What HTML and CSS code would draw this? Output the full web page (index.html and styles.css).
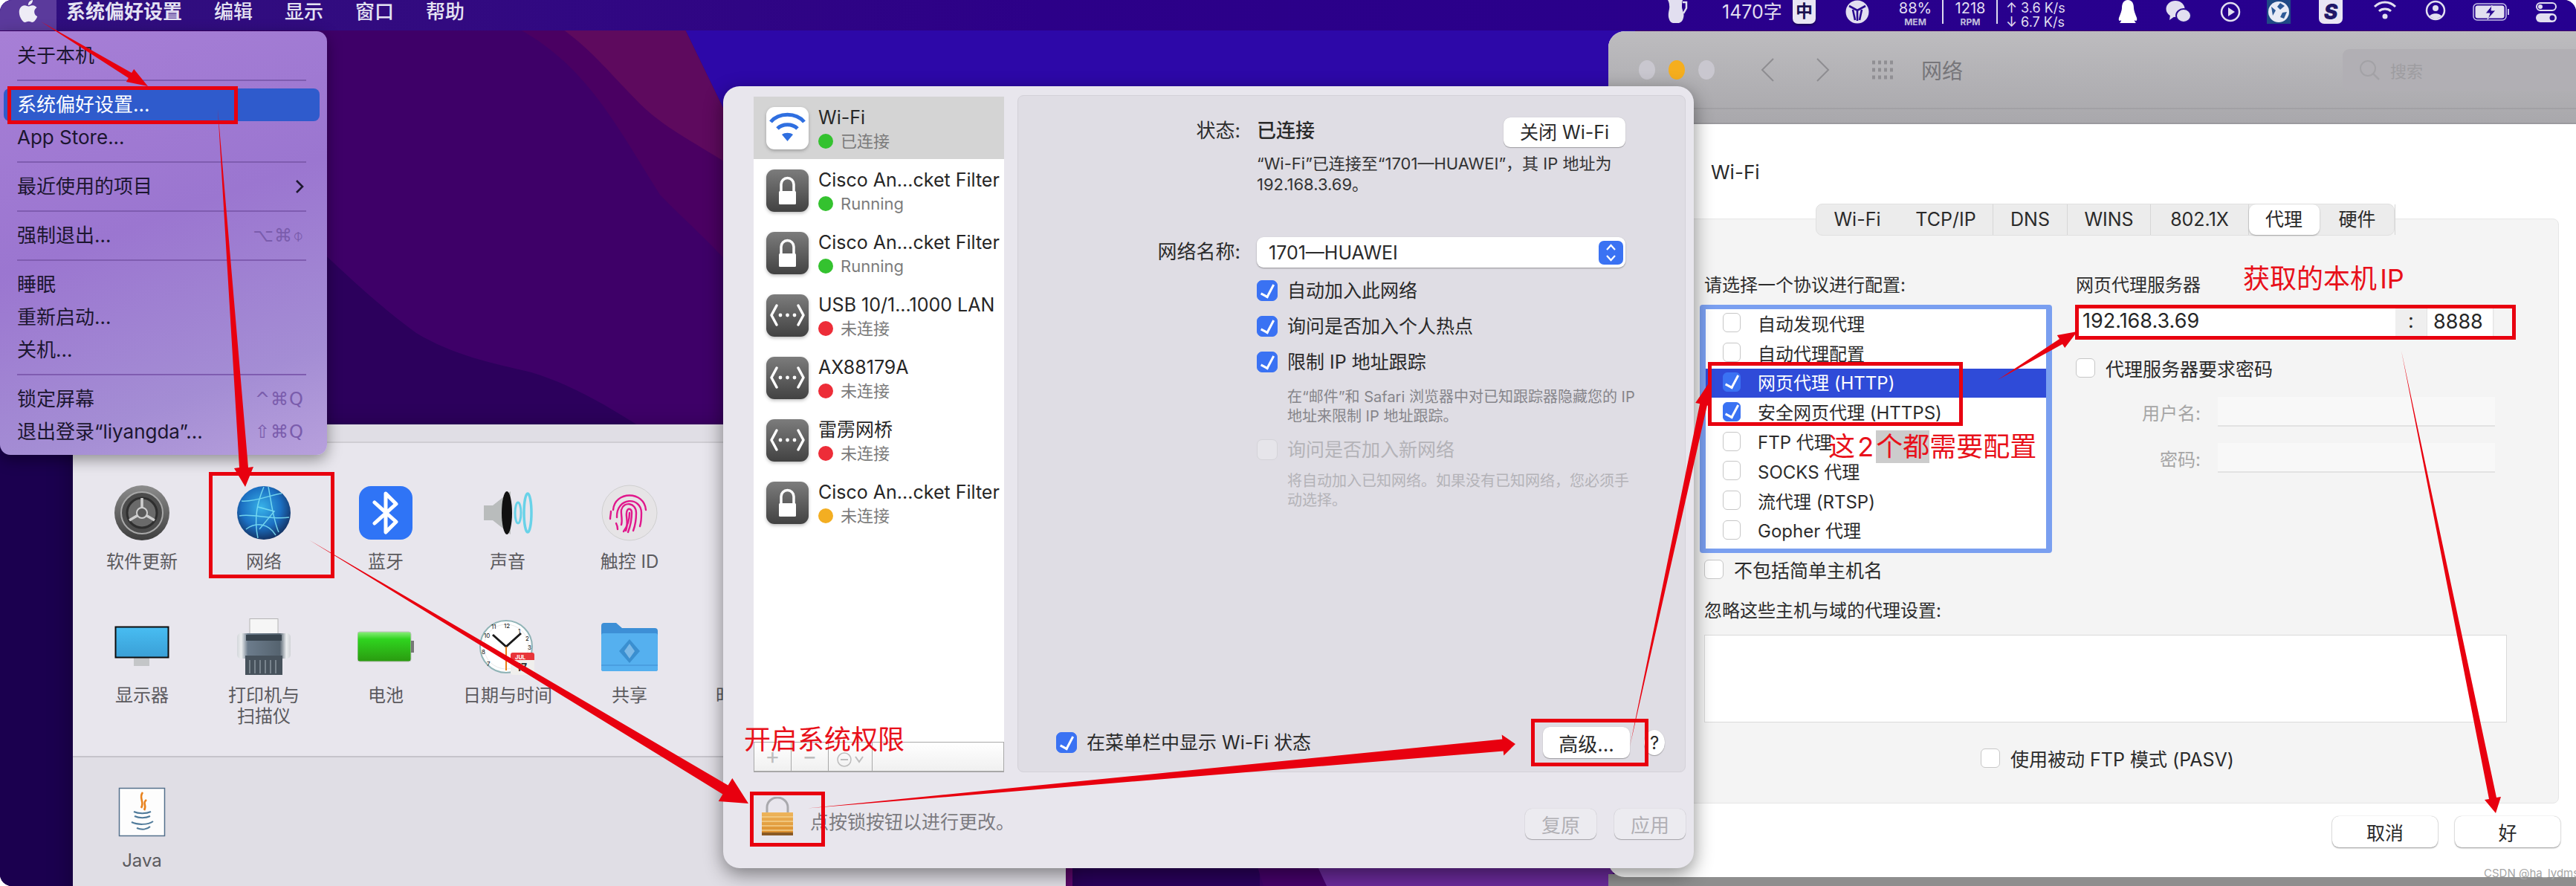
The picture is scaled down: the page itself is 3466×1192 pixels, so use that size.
FILE: index.html
```html
<!DOCTYPE html>
<html lang="zh-CN">
<head>
<meta charset="utf-8">
<title>网络</title>
<link rel="stylesheet" href="styles.css">
</head>
<body>
<svg class="defs" width="0" height="0">
  <defs>
    <linearGradient id="gTile" x1="0" y1="0" x2="0" y2="1"><stop offset="0" stop-color="#7c7c7c"/><stop offset="1" stop-color="#424242"/></linearGradient>
    <radialGradient id="gGlobe" cx=".45" cy=".4" r=".62"><stop offset="0" stop-color="#38b4ea"/><stop offset=".6" stop-color="#1b6fc2"/><stop offset="1" stop-color="#14305f"/></radialGradient>
    <linearGradient id="gUpd" x1="0" y1="0" x2="0" y2="1"><stop offset="0" stop-color="#8c8c8c"/><stop offset="1" stop-color="#3e3e3e"/></linearGradient>
    <linearGradient id="gBat" x1="0" y1="0" x2="0" y2="1"><stop offset="0" stop-color="#8bee7c"/><stop offset=".25" stop-color="#2fd41f"/><stop offset="1" stop-color="#2a9a10"/></linearGradient>
    <linearGradient id="gDisp" x1="0" y1="0" x2="0" y2="1"><stop offset="0" stop-color="#48bdf2"/><stop offset="1" stop-color="#3a9fd6"/></linearGradient>
    <linearGradient id="gLock" x1="0" y1="0" x2="0" y2="1"><stop offset="0" stop-color="#eeb55c"/><stop offset="1" stop-color="#d98a28"/></linearGradient>
    <linearGradient id="gPrint" x1="0" y1="0" x2="1" y2="0"><stop offset="0" stop-color="#d4d7db"/><stop offset=".08" stop-color="#eceef0"/><stop offset=".2" stop-color="#6c7c8c"/><stop offset=".8" stop-color="#55636f"/><stop offset=".92" stop-color="#eceef0"/><stop offset="1" stop-color="#cfd2d6"/></linearGradient>
    <symbol id="tileLock" viewBox="0 0 57 57">
      <rect x="0" y="0" width="57" height="57" rx="11" fill="url(#gTile)"/>
      <path d="M20 31V20a8.5 8.5 0 0 1 17 0v11" fill="none" stroke="#fff" stroke-width="3.5"/>
      <rect x="17" y="29" width="23" height="18" rx="1.5" fill="#fff"/>
    </symbol>
    <symbol id="tileLan" viewBox="0 0 57 57">
      <rect x="0" y="0" width="57" height="57" rx="11" fill="url(#gTile)"/>
      <path d="M14 15L7 28l7 13M43 15l7 13-7 13" fill="none" stroke="#fff" stroke-width="3.5" stroke-linecap="round" stroke-linejoin="round"/>
      <circle cx="19" cy="28" r="2.4" fill="#fff"/><circle cx="28.500" cy="28" r="2.4" fill="#fff"/><circle cx="38" cy="28" r="2.4" fill="#fff"/>
    </symbol>
  </defs>
</svg>

<div class="screen">
  <svg class="wallpaper" viewBox="0 0 3466 1192" width="3466" height="1192">
    <rect width="3466" height="1192" fill="#3e0068"/>
    <path d="M922 40L985 170H2200V40Z" fill="#2d08a8"/>
    <path d="M700 40C790 90 830 170 888 262C925 300 955 325 985 360V200L758 40Z" fill="#4a0062"/>
    <path d="M758 40C800 70 830 110 870 148C900 175 940 195 985 224V170L922 40Z" fill="#5e0a5e"/>
    <path d="M380 290C440 344 500 405 560 448C610 478 660 488 715 501C770 518 815 545 858 572V1192H0V290Z" fill="#2c005c"/>
    <rect x="0" y="600" width="98" height="592" fill="#1b004f"/>
    <rect x="1434" y="1160" width="9" height="32" fill="#6a0a7a"/>
    <rect x="1443" y="1160" width="252" height="32" fill="#2a005c"/>
    <path d="M1690 1160H1770L1785 1192H1700Z" fill="#46006a"/>
    <path d="M1770 1160H2170V1192H1785Z" fill="#6a2a9a"/>
    <rect x="2164" y="1176" width="1302" height="16" fill="#8e8e8e"/>
  </svg>

  <header class="menubar">
    <div class="mb-apple">
      <svg class="apple" viewBox="0 0 24 24"><path fill="#eeecf6" d="M12.152 6.896c-.948 0-2.415-1.078-3.96-1.04-2.04.027-3.91 1.183-4.961 3.014-2.117 3.675-.546 9.103 1.519 12.09 1.013 1.454 2.208 3.09 3.792 3.039 1.52-.065 2.09-.987 3.935-.987 1.831 0 2.35.987 3.96.948 1.637-.026 2.676-1.48 3.676-2.948 1.156-1.688 1.636-3.325 1.662-3.415-.039-.013-3.182-1.221-3.22-4.857-.026-3.04 2.48-4.494 2.597-4.559-1.429-2.09-3.623-2.324-4.39-2.376-2-.156-3.675 1.09-4.61 1.09zM15.53 3.83c.843-1.012 1.4-2.427 1.245-3.83-1.207.052-2.662.805-3.532 1.818-.78.896-1.454 2.338-1.273 3.714 1.338.104 2.715-.688 3.559-1.701"/></svg>
    </div>
    <nav class="mb-menus">
      <span class="mb-strong">系统偏好设置</span><span>编辑</span><span>显示</span><span>窗口</span><span>帮助</span>
    </nav>
    <div class="mb-status">
      <svg class="si si-cup" viewBox="0 0 28 32"><path fill="#e2dff0" d="M1 0H21C20 3 20 6 20 9C20 14 24 18 22 24C21 28 19 30 16 31H8C4 30 3 27 2 23C1 16 4 12 3 7C3 4 2 2 1 0Z"/><path d="M21 3H26V11L22 18" fill="none" stroke="#e2dff0" stroke-width="2.500"/></svg>
      <span class="si-word">1470字</span>
      <span class="si-zh">中</span>
      <svg class="si si-y" viewBox="0 0 32 32"><circle cx="16" cy="16" r="15.500" fill="#e2dff0"/><path d="M5 8L16 14L27 8M16 14V28M10 13L13 27M22 13L19 27" stroke="#2a0a90" stroke-width="2.600" fill="none"/></svg>
      <div class="si-stat si-mem"><b>88%</b><i>MEM</i></div>
      <span class="si-sep"></span>
      <div class="si-stat si-rpm"><b>1218</b><i>RPM</i></div>
      <span class="si-sep"></span>
      <div class="si-net"><span>↑ 3.6 K/s</span><span>↓ 6.7 K/s</span></div>
      <svg class="si si-qq" viewBox="0 0 28 32"><path fill="#fff" d="M14 0C20 0 22 5 22 11C22 14 24 19 26 24C27 28 25 29 23 27C23 29 24 30 25 31H3C4 30 5 29 5 27C3 29 1 28 2 24C4 19 6 14 6 11C6 5 8 0 14 0Z"/></svg>
      <svg class="si si-wx" viewBox="0 0 34 32"><ellipse cx="13" cy="12" rx="12.500" ry="11" fill="#e2dff0"/><ellipse cx="24" cy="21" rx="10" ry="9" fill="#e2dff0" stroke="#2a0a90" stroke-width="2"/><path d="M6 20L5 27L12 22Z" fill="#e2dff0"/></svg>
      <svg class="si si-play" viewBox="0 0 28 32"><circle cx="14" cy="16" r="12" fill="none" stroke="#e2dff0" stroke-width="2.500"/><path d="M11 10L20 16L11 22Z" fill="#e2dff0"/></svg>
      <svg class="si si-globe" viewBox="0 0 32 32"><rect width="32" height="32" fill="#1f4a85"/><circle cx="16" cy="16" r="14" fill="#e8ecf6"/><path d="M6 9L12 14L8 21ZM18 4L24 8L18 13L14 9ZM21 17L27 16L23 25L18 23Z" fill="#2d5a96"/></svg>
      <span class="si-s">S</span>
      <svg class="si si-wifi" viewBox="0 0 32 28"><path d="M2 9C10 1 22 1 30 9M8 15C12 11 20 11 24 15" fill="none" stroke="#e2dff0" stroke-width="3"/><circle cx="16" cy="22" r="3.500" fill="#e2dff0"/></svg>
      <svg class="si si-user" viewBox="0 0 28 28"><circle cx="14" cy="14" r="12" fill="none" stroke="#e2dff0" stroke-width="2.500"/><circle cx="14" cy="11" r="4" fill="#e2dff0"/><path d="M6 22C8 17 20 17 22 22L14 26Z" fill="#e2dff0"/></svg>
      <svg class="si si-bat" viewBox="0 0 50 24"><rect x="1" y="1" width="44" height="22" rx="5" fill="none" stroke="#c6c0e8" stroke-width="1.500"/><rect x="3.500" y="3.500" width="39" height="17" rx="3" fill="#e2dff0"/><path d="M26 3L17 14H23L20 22L31 10H25Z" fill="#2a0a90" stroke="#e2dff0" stroke-width="1"/><path d="M48 8V16" stroke="#c6c0e8" stroke-width="2"/></svg>
      <svg class="si si-tog" viewBox="0 0 28 28"><rect x="1" y="1" width="26" height="10" rx="5" fill="none" stroke="#e2dff0" stroke-width="2"/><circle cx="6" cy="6" r="3" fill="#e2dff0"/><rect y="15" width="28" height="12" rx="6" fill="#e2dff0"/><circle cx="22" cy="21" r="3.500" fill="#2a0a90"/></svg>
    </div>
  </header>

  <section class="win win-prefs">
    <div class="prefs-top"></div>
    <div class="prefs-grid">
      <div class="pref">
        <svg class="pref-icon" viewBox="0 0 76 76"><circle cx="38" cy="38" r="37" fill="url(#gUpd)"/><circle cx="38" cy="38" r="28" fill="#4c4c4c" stroke="#a8a8a8" stroke-width="2"/><circle cx="38" cy="38" r="20" fill="#6a6a6a" stroke="#2e2e2e" stroke-width="3"/><path d="M38 38L38 18M38 38L55 48M38 38L21 48" stroke="#cfcfcf" stroke-width="3.500"/><circle cx="38" cy="38" r="7" fill="#5a5a5a" stroke="#cfcfcf" stroke-width="2"/></svg>
        <span>软件更新</span>
      </div>
      <div class="pref">
        <svg class="pref-icon" viewBox="0 0 76 76"><circle cx="38" cy="38" r="36" fill="url(#gGlobe)"/><path d="M8 22C26 24 52 12 62 12M38 3C30 22 24 44 30 72M44 3C48 22 50 46 58 64M5 42C22 38 50 48 72 44M30 30L52 36L32 60M14 60C28 50 44 52 54 68" fill="none" stroke="#7fe3f5" stroke-width="1.500" opacity=".85"/></svg>
        <span>网络</span>
      </div>
      <div class="pref">
        <svg class="pref-icon" viewBox="0 0 76 76"><rect x="2" y="2" width="72" height="72" rx="16" fill="#2f74f6"/><path d="M23 24L52 50L38 64V12L52 26L23 52" fill="none" stroke="#fff" stroke-width="5" stroke-linejoin="round" stroke-linecap="round"/></svg>
        <span>蓝牙</span>
      </div>
      <div class="pref">
        <svg class="pref-icon" viewBox="0 0 76 76"><path d="M6 28H18L42 9V67L18 48H6Z" fill="#b9bcbc"/><ellipse cx="37" cy="38" rx="7" ry="29" fill="#111"/><ellipse cx="52" cy="38" rx="4" ry="14" fill="none" stroke="#68d2e8" stroke-width="3"/><ellipse cx="65" cy="38" rx="5" ry="26" fill="none" stroke="#68d2e8" stroke-width="3.500"/></svg>
        <span>声音</span>
      </div>
      <div class="pref">
        <svg class="pref-icon" viewBox="0 0 76 76"><circle cx="38" cy="38" r="37" fill="#e6e4e6" stroke="#cfcfcf"/><g fill="none" stroke="#e0188c" stroke-width="2.400" stroke-linecap="round"><path d="M16 34C18 8 58 8 60 34M12 46C12 42 13 40 13 36"/><path d="M21 44C20 16 54 16 54 38C54 46 54 50 52 56"/><path d="M27 54C29 46 26 40 27 34C30 22 47 24 47 38C47 48 46 54 43 62"/><path d="M33 62C37 52 33 44 34 38C35 30 41 32 41 38C41 48 39 56 36 64"/><path d="M38 38C38 48 35 56 30 63M20 52C22 56 22 58 22 60"/></g></svg>
        <span>触控 ID</span>
      </div>
      <div class="pref-spacer"></div>

      <div class="pref">
        <svg class="pref-icon" viewBox="0 0 76 76"><rect x="13" y="52" width="49" height="1" fill="#999"/><rect x="27" y="53" width="21" height="11" fill="#c4c6c8"/><rect x="2.500" y="11.500" width="71" height="41" fill="url(#gDisp)" stroke="#0c0c0c" stroke-width="2"/></svg>
        <span>显示器</span>
      </div>
      <div class="pref">
        <svg class="pref-icon" viewBox="0 0 76 76"><rect x="19" y="0.500" width="38" height="22" fill="#f6f6f6" stroke="#b4b4b4"/><rect x="2" y="20" width="72" height="34" rx="5" fill="url(#gPrint)"/><rect x="14" y="22" width="48" height="8" fill="#38444e"/><rect x="13" y="50" width="50" height="26" fill="#47525c"/><path d="M19 56V74M26 56V74M33 56V74M40 56V74M47 56V74M54 56V74" stroke="#78838c" stroke-width="2"/></svg>
        <span>打印机与<br>扫描仪</span>
      </div>
      <div class="pref">
        <svg class="pref-icon" viewBox="0 0 76 76"><rect x="0" y="18" width="72" height="40" rx="3" fill="url(#gBat)" stroke="#c0c0c0"/><rect x="72" y="30" width="4" height="16" fill="#777"/></svg>
        <span>电池</span>
      </div>
      <div class="pref">
        <svg class="pref-icon" viewBox="0 0 76 76"><circle cx="36" cy="38" r="35" fill="#fff" stroke="#8fb3b6" stroke-width="2"/><circle cx="36" cy="38" r="30" fill="none" stroke="#e9e9e9"/><path d="M36 38L18 22M36 38L56 20" stroke="#1a1a1a" stroke-width="3"/><path d="M36 38V70" stroke="#e8801a" stroke-width="2"/><rect x="42" y="46" width="32" height="30" rx="3" fill="#f0efed"/><path d="M42 56V49a3 3 0 0 1 3-3h26a3 3 0 0 1 3 3v7Z" fill="#e8353a"/><g font-family="Inter, sans-serif" font-size="8" fill="#111"><text x="33" y="13">12</text><text x="52" y="20">1</text><text x="62" y="30">2</text><text x="65" y="42">3</text><text x="16" y="14">11</text><text x="6" y="26">10</text><text x="3" y="48">8</text><text x="10" y="64">7</text></g><text x="48" y="55" font-family="Inter, sans-serif" font-size="7.500" font-weight="700" fill="#fff">JUL</text><text x="50" y="71" font-family="Inter, sans-serif" font-size="14" font-weight="700" fill="#333">17</text></svg>
        <span>日期与时间</span>
      </div>
      <div class="pref">
        <svg class="pref-icon" viewBox="0 0 76 76"><path d="M0 10a4 4 0 0 1 4-4H20L28 13H72a4 4 0 0 1 4 4V68a3 3 0 0 1-3 3H3a3 3 0 0 1-3-3Z" fill="#3d8fd6"/><rect x="0" y="20" width="76" height="51" rx="3" fill="#55b0ef"/><path d="M38 28L52 44L38 60L24 44Z" fill="#3a8fd0"/><path d="M38 34L45 44L38 54L31 44Z" fill="#a8d6f6" opacity=".6"/><rect x="0" y="62" width="76" height="2" fill="#4a9ee0"/></svg>
        <span>共享</span>
      </div>
      <div class="pref">
        <svg class="pref-icon" viewBox="0 0 76 76"></svg>
        <span>时间机器</span>
      </div>
    </div>
    <div class="prefs-other">
      <div class="pref">
        <svg class="pref-icon" viewBox="0 0 76 76"><rect x="7.500" y="6.500" width="61" height="64" fill="#fdfdfd" stroke="#54708c" stroke-width="1.500"/><path d="M39 12C33 20 42 24 37 33M44 22C38 27 45 29 41 36" fill="none" stroke="#e8821e" stroke-width="2.600"/><path d="M27 38C33 41 44 41 50 38M28 44C34 47 43 47 49 44M24 52C32 56 46 56 53 51M31 60C38 63 45 62 49 58" fill="none" stroke="#4f7a9a" stroke-width="2"/></svg>
        <span>Java</span>
      </div>
    </div>
  </section>

  <section class="win win-adv">
    <div class="tb">
      <div class="tb-main">
        <span class="light"></span><span class="light light-on"></span><span class="light"></span>
        <svg class="chev chev-l" viewBox="0 0 20 34"><path d="M18 2L3 17L18 32" fill="none" stroke="#8e8d91" stroke-width="2"/></svg>
        <svg class="chev chev-r" viewBox="0 0 20 34"><path d="M2 2L17 17L2 32" fill="none" stroke="#8e8d91" stroke-width="2"/></svg>
        <svg class="gridicon" viewBox="0 0 36 28"><path d="M2 4H34M2 14H34M2 24H34" stroke="#908f93" stroke-width="5" stroke-dasharray="4 4"/></svg>
        <span class="tb-title">网络</span>
        <div class="search">
          <svg class="search-ic" viewBox="0 0 28 28"><circle cx="12" cy="12" r="10" fill="none" stroke="#a3a2a6" stroke-width="2"/><path d="M19 19L27 27" stroke="#a3a2a6" stroke-width="2.500"/></svg>
          <span>搜索</span>
        </div>
      </div>
      <div class="tb-strip"></div>
    </div>
    <div class="adv-body">
      <div class="adv-name">Wi-Fi</div>
      <div class="tabs">
        <span>Wi-Fi</span><span>TCP/IP</span><span>DNS</span><span>WINS</span><span>802.1X</span><span class="tab-on">代理</span><span>硬件</span>
      </div>
      <div class="tabpanel">
        <div class="proxy-cols">
          <div class="proxy-left">
            <div class="plabel">请选择一个协议进行配置:</div>
            <ul class="protos">
              <li><i class="cb"></i>自动发现代理</li>
              <li><i class="cb"></i>自动代理配置</li>
              <li class="proto-sel"><i class="cb cb-on"></i>网页代理 (HTTP)</li>
              <li><i class="cb cb-on"></i>安全网页代理 (HTTPS)</li>
              <li><i class="cb"></i>FTP 代理</li>
              <li><i class="cb"></i>SOCKS 代理</li>
              <li><i class="cb"></i>流代理 (RTSP)</li>
              <li><i class="cb"></i>Gopher 代理</li>
            </ul>
          </div>
          <div class="proxy-right">
            <div class="plabel">网页代理服务器</div>
            <div class="server">
              <span class="server-host">192.168.3.69</span>
              <span class="server-colon">:</span>
              <span class="server-port">8888</span>
            </div>
            <label class="chk chk-pw"><i class="cb cb-lg"></i>代理服务器要求密码</label>
            <div class="cred"><span>用户名:</span><i class="cred-field"></i></div>
            <div class="cred cred-2"><span>密码:</span><i class="cred-field"></i></div>
          </div>
        </div>
        <label class="chk chk-simple"><i class="cb cb-lg"></i>不包括简单主机名</label>
        <div class="plabel plabel-ignore">忽略这些主机与域的代理设置:</div>
        <div class="bypass"></div>
        <label class="chk chk-pasv"><i class="cb cb-lg"></i>使用被动 FTP 模式 (PASV)</label>
      </div>
      <div class="adv-foot">
        <button class="foot-btn">取消</button>
        <button class="foot-btn">好</button>
      </div>
    </div>
  </section>

  <section class="win win-net">
    <div class="net-main">
      <aside class="side">
        <ul class="svc">
          <li class="svc-on">
            <svg class="tile" viewBox="0 0 57 57"><rect width="57" height="57" rx="11" fill="#fff"/><path d="M6 20C17 7 40 7 51 20M15 29C22 22 35 22 42 29" fill="none" stroke="#2f6fe0" stroke-width="5"/><path d="M21 37C25 34 32 34 36 37L28.500 46Z" fill="#2f6fe0"/></svg>
            <div class="svc-t"><b>Wi-Fi</b><span><i class="dot dot-g"></i>已连接</span></div>
          </li>
          <li><svg class="tile"><use href="#tileLock"/></svg><div class="svc-t"><b>Cisco An...cket Filter</b><span><i class="dot dot-g"></i>Running</span></div></li>
          <li><svg class="tile"><use href="#tileLock"/></svg><div class="svc-t"><b>Cisco An...cket Filter</b><span><i class="dot dot-g"></i>Running</span></div></li>
          <li><svg class="tile"><use href="#tileLan"/></svg><div class="svc-t"><b>USB 10/1...1000 LAN</b><span><i class="dot dot-r"></i>未连接</span></div></li>
          <li><svg class="tile"><use href="#tileLan"/></svg><div class="svc-t"><b>AX88179A</b><span><i class="dot dot-r"></i>未连接</span></div></li>
          <li><svg class="tile"><use href="#tileLan"/></svg><div class="svc-t"><b>雷雳网桥</b><span><i class="dot dot-r"></i>未连接</span></div></li>
          <li><svg class="tile"><use href="#tileLock"/></svg><div class="svc-t"><b>Cisco An...cket Filter</b><span><i class="dot dot-y"></i>未连接</span></div></li>
        </ul>
        <div class="svc-bar">
          <span class="bar-cell">+</span><span class="bar-cell">−</span>
          <span class="bar-cell bar-gear"><svg viewBox="0 0 40 24" width="40" height="24"><circle cx="12" cy="12" r="9" fill="none" stroke="#bdbdbd" stroke-width="1.500"/><path d="M7 12H17" stroke="#bdbdbd" stroke-width="2"/><path d="M27 8L32 15L37 8" fill="none" stroke="#bdbdbd" stroke-width="2"/></svg></span>
          <span class="bar-rest"></span>
        </div>
      </aside>
      <div class="panel">
        <div class="form">
          <div class="f-l f-status-l">状态:</div>
          <div class="f-status"><span>已连接</span><button class="btn btn-off">关闭 Wi-Fi</button></div>
          <div class="f-desc">“Wi-Fi”已连接至“1701—HUAWEI”，其 IP 地址为<br>192.168.3.69。</div>
          <div class="f-l f-name-l">网络名称:</div>
          <div class="select"><span>1701—HUAWEI</span>
            <svg class="stepper" viewBox="0 0 33 32"><rect width="33" height="32" rx="7" fill="#3a72f3"/><path d="M11 12L16.500 6L22 12M11 20L16.500 26L22 20" fill="none" stroke="#fff" stroke-width="2.200"/></svg>
          </div>
          <div class="f-checks">
            <label class="chk chk-n"><i class="cb cb-xl cb-on"></i>自动加入此网络</label>
            <label class="chk chk-n"><i class="cb cb-xl cb-on"></i>询问是否加入个人热点</label>
            <label class="chk chk-n"><i class="cb cb-xl cb-on"></i>限制 IP 地址跟踪</label>
            <p class="note">在“邮件”和 Safari 浏览器中对已知跟踪器隐藏您的 IP<br>地址来限制 IP 地址跟踪。</p>
            <label class="chk chk-n chk-dis"><i class="cb cb-xl cb-dis"></i>询问是否加入新网络</label>
            <p class="note note-dis">将自动加入已知网络。如果没有已知网络，您必须手<br>动选择。</p>
          </div>
        </div>
        <div class="panel-foot">
          <label class="chk chk-n"><i class="cb cb-xl cb-on"></i>在菜单栏中显示 Wi-Fi 状态</label>
          <button class="btn btn-adv">高级...</button>
          <button class="btn btn-q">?</button>
        </div>
      </div>
    </div>
    <footer class="net-foot">
      <svg class="padlock" viewBox="0 0 44 52"><path d="M8 24V14a14 13 0 0 1 28 0v10" fill="none" stroke="#a9a9ad" stroke-width="3"/><rect x="1" y="21" width="42" height="31" fill="url(#gLock)"/><path d="M1 27H43M1 33H43M1 39H43M1 45H43" stroke="#f4cf8d" stroke-width="1.500"/><rect x="1" y="48" width="42" height="4" fill="#8a5a24"/></svg>
      <span class="foot-text">点按锁按钮以进行更改。</span>
      <div class="foot-btns"><button class="btn btn-dim">复原</button><button class="btn btn-dim">应用</button></div>
    </footer>
  </section>

  <div class="applemenu">
    <div class="mi">关于本机</div>
    <div class="ms"></div>
    <div class="mi mi-on">系统偏好设置...</div>
    <div class="mi">App Store...</div>
    <div class="ms"></div>
    <div class="mi">最近使用的项目<svg class="mi-arrow" viewBox="0 0 12 20"><path d="M2 2L10 10L2 18" fill="none" stroke="#1e1830" stroke-width="2.600"/></svg></div>
    <div class="ms"></div>
    <div class="mi">强制退出...<kbd>⌥⌘⌽</kbd></div>
    <div class="ms"></div>
    <div class="mi">睡眠</div>
    <div class="mi">重新启动...</div>
    <div class="mi">关机...</div>
    <div class="ms"></div>
    <div class="mi">锁定屏幕<kbd>^⌘Q</kbd></div>
    <div class="mi">退出登录“liyangda”...<kbd>⇧⌘Q</kbd></div>
  </div>

  <div class="watermark">CSDN @ha_lydms</div>

  <svg class="marks" viewBox="0 0 3466 1192" width="3466" height="1192">
    <g fill="none" stroke="#e8000f" stroke-width="5">
      <rect x="12.500" y="118.500" width="305" height="46"/>
      <rect x="283.500" y="637.500" width="164" height="138"/>
      <rect x="1011.500" y="1067.500" width="96" height="69"/>
      <rect x="2062.500" y="969.500" width="153" height="59"/>
      <rect x="2300.500" y="489.500" width="338" height="81"/>
      <rect x="2794.500" y="412.500" width="588" height="42"/>
    </g>
    <g fill="#e8000f">
      <polygon points="55,29 172.900,104.900 169.800,110.100 199,116 180.200,92.900 177.100,98.100"/>
      <polygon points="293,147 322,629 315,630 330,655 341,628 334,629"/>
      <polygon points="416,726.500 972.400,1068.500 966.700,1078 1007,1081 985.300,1047 979.600,1056.500"/>
      <polygon points="1086.500,1087.500 2022.700,1010.500 2023.300,1016.400 2039,1001 2020.700,988.600 2021.300,994.500"/>
      <polygon points="2193,1004 2296.900,545.500 2302.800,546.700 2298,517 2281.200,542.100 2287.100,543.300"/>
      <polygon points="2688,511 2775,462.900 2778.200,468 2795,446 2767.800,451 2771,456.100"/>
      <polygon points="3231,472 3349,1075 3343,1076 3358,1094 3365,1072 3359,1073"/>
    </g>
  </svg>
  <div class="note-red note-lock">开启系统权限</div>
  <div class="note-red note-ip">获取的本机 IP</div>
  <div class="note-red note-both">这 2 <mark>个都</mark>需要配置</div>
</div>
</body>
</html>
```
FILE: styles.css
```css
* { box-sizing: border-box; }
html, body { margin: 0; padding: 0; background: #fff; }
body { font-family: Inter, "Noto Sans CJK SC", sans-serif; color: #222; overflow: hidden; }
.defs { position: absolute; }
ul, p { margin: 0; padding: 0; list-style: none; }
i, b, kbd { font-style: normal; }
button { font: inherit; }

.screen { position: relative; width: 3466px; height: 1192px; overflow: hidden; border-radius: 16px 16px 0 16px; }
.wallpaper, .marks { position: absolute; left: 0; top: 0; }
.marks { z-index: 60; pointer-events: none; }

/* menu bar */
.menubar { position: absolute; left: 0; top: 0; right: 0; height: 41px; display: flex; align-items: flex-start; z-index: 40;
  background: linear-gradient(90deg, #2f0f7e 0, #320a80 600px, #2c0088 1400px, #260090 3466px); color: #ecebf6; }
.mb-apple { width: 76px; height: 41px; background: #5b3a9c; display: flex; justify-content: center; }
.apple { width: 30px; height: 30px; }
.mb-menus { display: flex; font-size: 26px; line-height: 32px; font-weight: 500; padding-left: 13px; color: #e4e2f2; }
.mb-menus span { margin-right: 43px; }
.mb-strong { font-weight: 700; }
.mb-status { position: absolute; left: 2243px; top: 0; height: 34px; display: flex; align-items: flex-start; color: #e2dff0; }
.si { display: block; flex: none; }
.si-cup { width: 28px; height: 32px; }
.si-word { font-size: 25px; line-height: 32px; margin-left: 46px; width: 95px; white-space: nowrap; }
.si-zh { width: 31px; height: 32px; border-radius: 0 0 7px 7px; background: #e9e6f4; color: #1b1250; font-size: 23px; line-height: 30px; font-weight: 700; text-align: center; box-shadow: 0 2px 3px rgba(0,0,0,.4); }
.si-y { width: 32px; height: 32px; margin-left: 40px; }
.si-stat { display: flex; flex-direction: column; align-items: center; padding-top: 1px; }
.si-stat b { font-size: 20px; line-height: 20px; font-weight: 400; }
.si-stat i { font-size: 12px; line-height: 16px; font-weight: 700; color: #c0bcdc; margin-top: 1px; }
.si-mem { width: 52px; margin-left: 36px; }
.si-sep { width: 2px; height: 32px; background: #dedbee; margin: 0 11px 0 10px; }
.si-rpm { width: 50px; }
.si-net { display: flex; flex-direction: column; font-size: 18px; line-height: 19px; width: 93px; white-space: nowrap; padding-top: 1px; }
.si-qq { width: 28px; height: 32px; margin-left: 57px; }
.si-wx { width: 34px; height: 32px; margin-left: 37px; }
.si-play { width: 28px; height: 32px; margin-left: 39px; }
.si-globe { width: 32px; height: 32px; margin-left: 35px; }
.si-s { width: 32px; height: 32px; margin-left: 38px; background: #e9e6f4; border-radius: 0 0 7px 7px; color: #211868; font-size: 28px; line-height: 32px; font-weight: 900; font-style: italic; text-align: center; }
.si-wifi { width: 32px; height: 28px; margin-left: 41px; }
.si-user { width: 28px; height: 28px; margin-left: 38px; }
.si-bat { width: 50px; height: 24px; margin: 4px 0 0 36px; }
.si-tog { width: 28px; height: 28px; margin: 3px 0 0 35px; }

/* windows */
.win { position: absolute; }
.win-prefs { left: 98px; top: 571px; width: 1336px; height: 640px; background: #e8e6ed; box-shadow: 0 8px 30px rgba(0,0,0,.35); z-index: 5; }
.prefs-top { height: 25px; background: #e0dee5; border-bottom: 2px solid #cfcdd3; }
.prefs-grid { display: grid; grid-template-columns: repeat(6, 164px); grid-auto-rows: 180px; padding: 56px 0 0 11px; height: 423px; border-bottom: 2px solid #c5c3ca; }
.pref-spacer { grid-column: 6; }
.prefs-other { background: #e0dee5; padding: 35px 0 0 11px; height: 192px; }
.pref { display: flex; flex-direction: column; align-items: center; font-size: 24px; line-height: 28px; color: #5b5a5e; text-align: center; width: 164px; }
.pref-icon { width: 76px; height: 76px; flex: none; margin-bottom: 14px; }

.win-net { left: 973px; top: 116px; width: 1306px; height: 1052px; background: #e8e6ed; border-radius: 22px; box-shadow: 0 8px 26px rgba(0,0,0,.45); z-index: 20; display: flex; flex-direction: column; padding: 12px 11px 0 41px; }
.net-main { display: flex; height: 911px; gap: 18px; }
.side { width: 337px; display: flex; flex-direction: column; padding-top: 2px; }
.svc { flex: 1; background: #fff; }
.svc li { height: 84px; display: flex; padding: 14px 0 0 17px; gap: 13px; }
.svc-on { background: #d4d4d4; }
.tile { width: 57px; height: 57px; flex: none; filter: drop-shadow(0 2px 2px rgba(0,0,0,.25)); }
.svc-t { display: flex; flex-direction: column; margin-top: -2px; white-space: nowrap; }
.svc-t b { font-size: 25px; line-height: 32px; font-weight: 400; color: #262626; }
.svc-t span { font-size: 22px; line-height: 32px; color: #7b7b7b; display: flex; align-items: center; gap: 10px; }
.dot { width: 20px; height: 20px; border-radius: 50%; }
.dot-g { background: #34c22f; }
.dot-r { background: #ed2d38; }
.dot-y { background: #f3ae22; }
.svc-bar { height: 41px; display: flex; background: linear-gradient(#fff, #f0f0f0); border: 1px solid #a8a8a8; border-width: 1px 1px 2px 1px; color: #bdbdbd; font-size: 30px; line-height: 36px; }
.bar-cell { width: 50px; border-right: 1px solid #a8a8a8; text-align: center; }
.bar-gear { width: 59px; padding-top: 6px; }
.bar-rest { flex: 1; border-left: 1px solid #a8a8a8; margin-left: -1px; }

.panel { width: 899px; background: #dfdde4; border: 1px solid #d3d1d8; border-radius: 8px; display: flex; flex-direction: column; }
.form { display: grid; grid-template-columns: 299px 540px; column-gap: 22px; font-size: 26px; padding-top: 29px; }
.f-l { text-align: right; color: #2c2c2c; line-height: 40px; }
.f-status-l { margin-top: -2px; }
.f-status { width: 496px; display: flex; justify-content: space-between; align-items: flex-start; line-height: 36px; font-weight: 500; color: #2a2a2a; }
.btn { border: 0; background: #fff; border-radius: 9px; box-shadow: 0 1px 1px rgba(0,0,0,.28), 0 0 1px rgba(0,0,0,.2); color: #2a2a2a; font-size: 24px; padding: 0; }
.btn-off { width: 164px; height: 40px; font-weight: 400; font-size: 25px; }
.f-desc { grid-column: 2; font-size: 22px; line-height: 28px; color: #333; margin-top: 8px; }
.f-name-l { margin-top: 57px; }
.select { width: 496px; height: 41px; margin-top: 57px; background: #fff; border-radius: 9px; box-shadow: 0 1px 2px rgba(0,0,0,.35); display: flex; align-items: center; justify-content: space-between; padding: 0 3px 0 16px; font-size: 25px; color: #2a2a2a; }
.stepper { width: 33px; height: 32px; }
.f-checks { grid-column: 2; padding-top: 17px; }
.chk { display: flex; align-items: center; white-space: nowrap; }
.chk-n { font-size: 25px; line-height: 28px; height: 28px; gap: 13px; color: #2a2a2a; margin-bottom: 20px; }
.chk-dis { color: #b4b3b8; margin-bottom: 0; }
.note { font-size: 20px; line-height: 26px; color: #86858a; margin: 1px 0 18px 41px; white-space: nowrap; width: 490px; }
.note-dis { color: #b4b3b8; margin: 15px 0 0 41px; }
.panel-foot { margin-top: auto; display: flex; align-items: center; padding: 0 0 18px 51px; }
.panel-foot .chk-n { margin: 0 312px 0 0; }
.btn-adv { width: 117px; height: 42px; font-size: 26px; margin-right: 19px; }
.btn-q { width: 28px; height: 34px; border-radius: 50%; font-size: 24px; }
.net-foot { flex: 1; display: flex; align-items: flex-start; padding: 33px 0 0 10px; }
.padlock { width: 44px; height: 52px; flex: none; }
.foot-text { font-size: 25px; line-height: 30px; color: #7c7b80; margin: 19px 0 0 22px; }
.foot-btns { margin: 16px 0 0 auto; display: flex; gap: 24px; }
.btn-dim { width: 96px; height: 41px; color: #b1b0b5; font-size: 26px; background: #ecebf0; }

.win-adv { left: 2164px; top: 42px; right: 0; height: 1138px; background: #fff; border-radius: 22px 0 0 22px; z-index: 10; overflow: hidden; }
.tb { height: 125px; background: linear-gradient(#bdbcbf, #a9a8ac); border-bottom: 2px solid #9b9a9e; }
.tb-main { height: 105px; display: flex; align-items: center; padding-left: 41px; border-bottom: 2px solid #a2a1a5; }
.light { width: 22px; height: 26px; border-radius: 50%; background: #c9c7cf; margin-right: 18px; }
.light-on { background: #f5ae1e; }
.chev { width: 20px; height: 36px; }
.chev-l { margin-left: 43px; }
.chev-r { margin-left: 55px; }
.gridicon { width: 36px; height: 28px; margin-left: 54px; }
.tb-title { font-size: 28px; color: #77767a; margin-left: 32px; }
.search { margin-left: auto; width: 314px; height: 56px; background: #b1afb4; border-radius: 9px 0 0 9px; display: flex; align-items: center; padding-left: 22px; gap: 14px; font-size: 22px; color: #9e9da1; }
.search-ic { width: 28px; height: 28px; }
.adv-body { padding: 49px 23px 0 57px; }
.adv-name { font-size: 26px; line-height: 32px; padding-left: 81px; color: #2a2a2a; }
.tabs { position: relative; z-index: 1; margin: 26px auto -23px; width: 779px; height: 43px; display: grid; grid-template-columns: 111px 127px 100px 112px 132px 95px 102px; background: #ececec; border: 1px solid #e0e0e0; border-radius: 9px; font-size: 25px; line-height: 40px; text-align: center; color: #2a2a2a; }
.tabs span + span { box-shadow: -1px 0 0 #d6d6d6 inset; }
.tab-on { background: #fff; border-radius: 9px; box-shadow: 0 1px 2px rgba(0,0,0,.3) !important; }
.tabpanel { height: 787px; background: #f4f4f4; border: 1px solid #e6e6e6; border-radius: 8px; padding: 74px 0 0 71px; font-size: 24px; color: #2a2a2a; }
.proxy-cols { display: flex; height: 384px; }
.proxy-left { width: 500px; flex: none; }
.plabel { line-height: 30px; height: 30px; font-size: 24px; color: #2d2d2d; margin-bottom: 11px; }
.protos { width: 474px; height: 334px; margin-left: -6px; background: #fff; border: solid #7a9ff0; border-width: 6px 8px; border-radius: 4px; }
.protos li { height: 39.800px; display: flex; align-items: center; padding: 0 0 3px 23px; gap: 23px; white-space: nowrap; font-size: 24px; color: #2c2c2c; }
.protos .proto-sel { background: #2f4bd8; color: #fff; }
.cb { display: flex; align-items: center; justify-content: center; flex: none; width: 24px; height: 26px; background: #fff; border: 1px solid #c7c7c7; border-radius: 6px; }
.cb-lg { width: 26px; height: 26px; }
.cb-xl { width: 28px; height: 28px; border-radius: 7px; }
.cb-on { background: #3a72f3; border-color: #3a72f3; }
.cb-on::after { content: ""; width: 8px; height: 17px; margin-top: -3px; border: solid #fff; border-width: 0 3px 3px 0; transform: rotate(28deg); }
.cb-dis { background: #e6e5ea; border-color: #d4d3d8; }
.proxy-right { width: 600px; }
.server { display: flex; height: 44px; margin: 3px 0 0 2px; width: 561px; background: #efefef; align-items: stretch; line-height: 44px; font-size: 27px; }
.server-host { width: 428px; background: #fff; padding-left: 7px; color: #262626; }
.server-colon { width: 42px; text-align: center; }
.server-port { width: 90px; background: #fff; padding-left: 8px; color: #262626; border: 1px solid #e3e3e3; }
.chk-pw { margin-top: 27px; gap: 14px; font-size: 25px; height: 27px; }
.cred { display: flex; align-items: center; justify-content: flex-end; width: 564px; margin-top: 26px; color: #a6a6a6; font-size: 24px; gap: 0; }
.cred span { white-space: nowrap; margin-right: 23px; }
.cred-2 { margin-top: 22px; }
.cred-field { width: 373px; height: 40px; background: #f8f8f8; border-bottom: 2px solid #e2e2e2; flex: none; }
.chk-simple { gap: 14px; font-size: 25px; height: 26px; }
.plabel-ignore { margin: 28px 0 17px; }
.bypass { width: 1080px; height: 118px; background: #fff; border: 1px solid #dadada; }
.chk-pasv { justify-content: center; gap: 14px; font-size: 25px; height: 26px; margin: 35px 0 0 -64px; }
.adv-foot { display: flex; justify-content: flex-end; gap: 23px; margin: 17px -2px 0 0; }
.foot-btn { width: 142px; height: 42px; border: 0; background: #fff; border-radius: 9px; box-shadow: 0 1px 2px rgba(0,0,0,.4), 0 0 1px rgba(0,0,0,.3); font-size: 25px; color: #2a2a2a; }

/* apple menu */
.applemenu { position: absolute; left: 0; top: 42px; width: 440px; height: 570px; z-index: 45; padding: 11px 0 9px; border-radius: 0 14px 14px 14px; background: linear-gradient(160deg, #a77fd6 0, #9b76d0 45%, #a48dd4 80%, #b7a0dc 100%); box-shadow: 0 6px 20px rgba(0,0,0,.4); font-size: 26px; color: #1c1630; }
.mi { height: 44px; line-height: 44px; margin: 0 10px 0 5px; padding: 0 21px 0 18px; display: flex; align-items: center; justify-content: space-between; white-space: nowrap; }
.mi-on { background: #2f5bcc; color: #fff; border-radius: 8px; }
.ms { height: 22px; margin: 0 28px 0 23px; position: relative; }
.ms::after { content: ""; position: absolute; left: 0; right: 0; top: 10px; height: 2px; background: #7f5cb0; }
.mi-arrow { width: 12px; height: 20px; }
.mi kbd { font-family: "DejaVu Sans", sans-serif; font-size: 24px; color: #7a5cac; letter-spacing: 1px; }

/* annotations */
.note-red { position: absolute; z-index: 61; font-size: 36px; line-height: 44px; color: #e8101a; white-space: nowrap; }
.note-lock { left: 1001px; top: 973px; }
.note-ip { left: 3018px; top: 353px; word-spacing: -6px; }
.note-both { left: 2460px; top: 579px; word-spacing: -7px; }
.note-both mark { background: #cccccc; color: #e8101a; }
.watermark { position: absolute; left: 3342px; top: 1166px; z-index: 30; font-size: 15px; line-height: 18px; color: #a6a6a6; white-space: nowrap; }
```
